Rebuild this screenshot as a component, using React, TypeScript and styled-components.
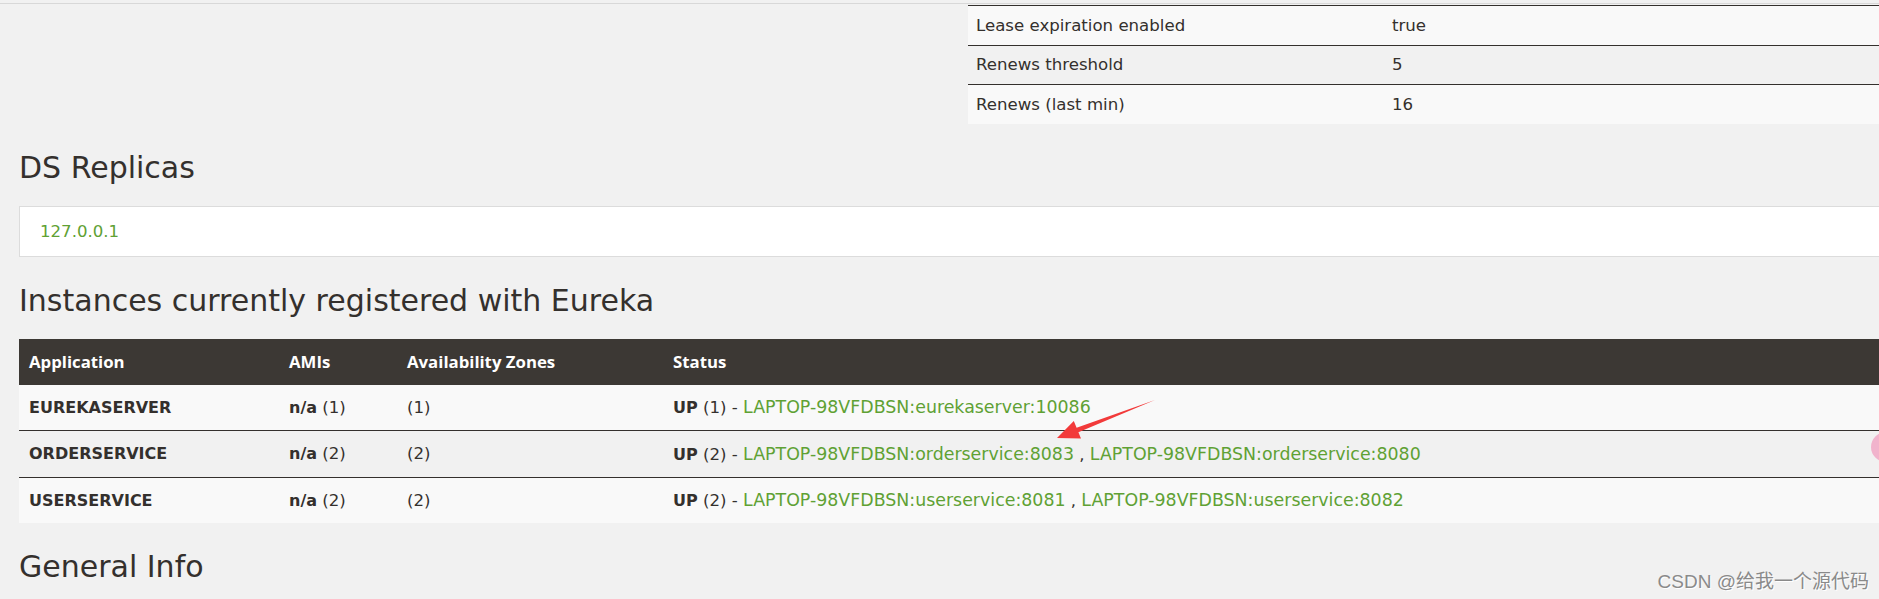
import React from 'react';
import styled, { createGlobalStyle } from 'styled-components';

const GlobalStyle = createGlobalStyle`
  html, body {
    margin: 0;
    padding: 0;
    background: #f1f1f1;
  }
  body {
    font-family: "DejaVu Sans", "Noto Sans", "Noto Sans CJK SC", sans-serif;
    font-size: 16.6px;
    color: #34302d;
    width: 1879px;
    height: 599px;
    overflow: hidden;
  }
`;

const Page = styled.div`
  position: relative;
  width: 1879px;
  height: 599px;
  overflow: hidden;
  padding-top: 3px;
  box-sizing: border-box;
`;

const TopLine = styled.div`
  height: 1px;
  background: #d8d8d8;
  margin-bottom: 1px;
`;

const Container = styled.div`
  padding-left: 19px;
`;

const TopRow = styled.div`
  display: grid;
  grid-template-columns: 949px 1fr;
`;

const Table = styled.table`
  width: 100%;
  border-collapse: collapse;
  table-layout: fixed;
`;

const InfoRow = styled.tr<{ $alt?: boolean }>`
  background: ${p => (p.$alt ? '#f1f1f1' : '#f9f9f9')};
  border-top: 1px solid #34302d;
`;

const InfoCell = styled.td`
  height: 38.6px;
  padding: 0 8px;
  vertical-align: middle;
  white-space: nowrap;
`;

const Heading = styled.h1`
  font-size: 30px;
  font-weight: 400;
  line-height: 32px;
  margin: 28px 0 22px;
`;

const ReplicaBox = styled.div`
  background: #fff;
  border: 1px solid #dcdcdc;
  border-right: none;
  height: 49px;
  display: flex;
  align-items: center;
  padding-left: 20px;
`;

const Link = styled.a<{ $wide?: boolean }>`
  color: #5fa134;
  text-decoration: none;
  font-size: ${p => (p.$wide ? '17.4px' : 'inherit')};
`;

const HeadRow = styled.tr`
  background: #3c3834;
`;

const HeadCell = styled.th`
  height: 46px;
  padding: 0 10px;
  text-align: left;
  color: #fff;
  font-family: "Open Sans", "Noto Sans", sans-serif;
  font-size: 16.8px;
  font-weight: 700;
  vertical-align: middle;
`;

const BodyRow = styled.tr<{ $alt?: boolean; $first?: boolean }>`
  background: ${p => (p.$alt ? '#f1f1f1' : '#f9f9f9')};
  border-top: ${p => (p.$first ? 'none' : '1px solid #34302d')};
`;

const Cell = styled.td`
  height: 45.4px;
  padding: 0 10px;
  vertical-align: middle;
  white-space: nowrap;
`;

const Bold = styled.b`
  font-size: 16px;
  font-weight: 700;
`;

const ArrowMark = styled.svg`
  position: absolute;
  left: 1040px;
  top: 391px;
  width: 130px;
  height: 60px;
`;

const PinkDot = styled.div`
  position: absolute;
  left: 1871px;
  top: 432px;
  width: 30px;
  height: 30px;
  border-radius: 50%;
  background: #f1b3cc;
`;

const Watermark = styled.div`
  position: absolute;
  right: 10px;
  bottom: 6px;
  font-size: 19px;
  color: #8a8a8a;
  text-shadow: 1px 1px 0 #ffffff;
  font-family: "Liberation Sans", "Noto Sans CJK SC", sans-serif;
`;

const info = [
  ['Lease expiration enabled', 'true'],
  ['Renews threshold', '5'],
  ['Renews (last min)', '16'],
];

const apps = [
  { name: 'EUREKASERVER', n: 1, links: ['LAPTOP-98VFDBSN:eurekaserver:10086'] },
  { name: 'ORDERSERVICE', n: 2, links: ['LAPTOP-98VFDBSN:orderservice:8083', 'LAPTOP-98VFDBSN:orderservice:8080'] },
  { name: 'USERSERVICE', n: 2, links: ['LAPTOP-98VFDBSN:userservice:8081', 'LAPTOP-98VFDBSN:userservice:8082'] },
];

const App = (): JSX.Element => {
  return (
    <Page>
      <GlobalStyle />
      <TopLine />
      <Container>
        <TopRow>
          <div />
          <Table>
            <colgroup>
              <col style={{ width: 416 }} />
              <col />
            </colgroup>
            <tbody>
              {info.map(([k, v], i) => (
                <InfoRow key={k} $alt={i % 2 === 1}>
                  <InfoCell>{k}</InfoCell>
                  <InfoCell>{v}</InfoCell>
                </InfoRow>
              ))}
            </tbody>
          </Table>
        </TopRow>

        <Heading>DS Replicas</Heading>
        <ReplicaBox>
          <Link href="#">127.0.0.1</Link>
        </ReplicaBox>

        <Heading>Instances currently registered with Eureka</Heading>
        <Table>
          <colgroup>
            <col style={{ width: 260 }} />
            <col style={{ width: 118 }} />
            <col style={{ width: 266 }} />
            <col />
          </colgroup>
          <thead>
            <HeadRow>
              <HeadCell>Application</HeadCell>
              <HeadCell>AMIs</HeadCell>
              <HeadCell>Availability Zones</HeadCell>
              <HeadCell>Status</HeadCell>
            </HeadRow>
          </thead>
          <tbody>
            {apps.map((a, i) => (
              <BodyRow key={a.name} $alt={i % 2 === 1} $first={i === 0}>
                <Cell><Bold>{a.name}</Bold></Cell>
                <Cell><Bold>n/a</Bold> ({a.n})</Cell>
                <Cell>({a.n})</Cell>
                <Cell>
                  <Bold>UP</Bold> ({a.n}) -{' '}
                  {a.links.map((l, j) => (
                    <React.Fragment key={l}>
                      {j > 0 && ' , '}
                      <Link href="#" $wide>{l}</Link>
                    </React.Fragment>
                  ))}
                </Cell>
              </BodyRow>
            ))}
          </tbody>
        </Table>

        <Heading>General Info</Heading>
      </Container>

      <ArrowMark viewBox="0 0 130 60">
        <polygon
          points="115,9 38.4,41.3 41,47.5 17,47 33.8,30 36.6,36.7"
          fill="#f23a3a"
        />
      </ArrowMark>
      <PinkDot />
      <Watermark>CSDN @给我一个源代码</Watermark>
    </Page>
  );
};

export default App;
